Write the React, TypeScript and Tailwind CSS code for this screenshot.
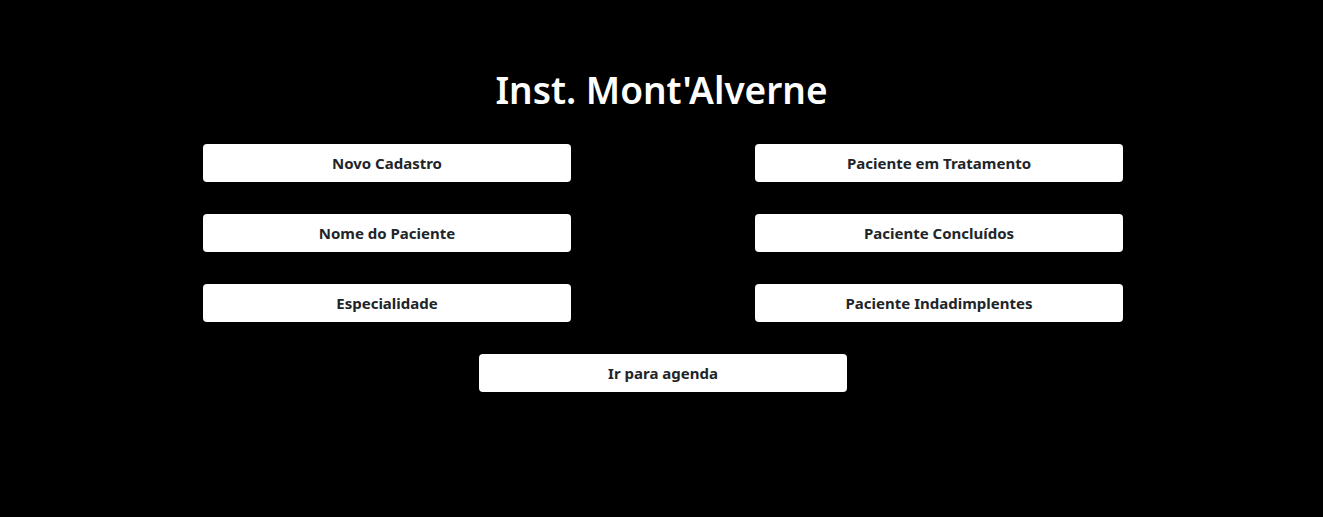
import { Fragment } from "react";

export default function App() {
  const left = ["Novo Cadastro", "Nome do Paciente", "Especialidade"];
  const right = ["Paciente em Tratamento", "Paciente Concluídos", "Paciente Indadimplentes"];

  return (
    <div className="min-h-[517px] bg-black font-['Noto_Sans',sans-serif]">
      <h1 className="pt-[66px] text-center text-[37px] font-semibold leading-[48px] text-white">
        Inst. Mont'Alverne
      </h1>

      <div className="mt-[30px] flex justify-center">
        <div className="ml-[3px] grid w-[920px] grid-cols-2 gap-x-[184px] gap-y-[32px]">
          {left.map((label, i) => (
            <Fragment key={label}>
              <MenuButton label={label} />
              <MenuButton label={right[i]} />
            </Fragment>
          ))}
          <div className="col-span-2 flex justify-center">
            <div className="w-[368px]">
              <MenuButton label="Ir para agenda" />
            </div>
          </div>
        </div>
      </div>
    </div>
  );
}

function MenuButton({ label }: { label: string }) {
  return (
    <button
      type="button"
      className="h-[38px] w-full rounded-[4px] bg-white text-[15px] font-bold text-[#212529]"
    >
      {label}
    </button>
  );
}
